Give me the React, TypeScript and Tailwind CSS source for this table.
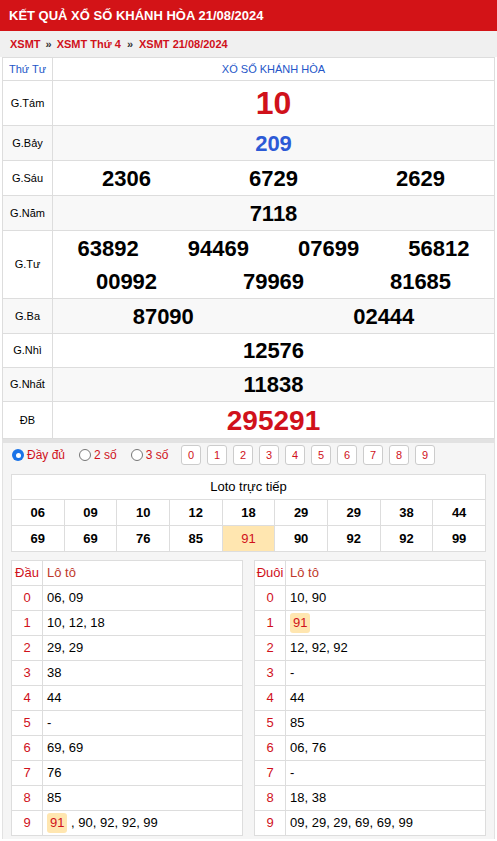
import type { ReactNode } from 'react';

const RED = 'text-[#d0111b]';

type PrizeRow = {
  label: string;
  lines: string[][];
  size: string;
  color: string;
  h: string;
  gray?: boolean;
};

const prizes: PrizeRow[] = [
  { label: 'G.Tám', lines: [['10']], size: 'text-[32px]', color: 'text-[#d0111b]', h: 'h-[45px]' },
  { label: 'G.Bảy', lines: [['209']], size: 'text-[22px]', color: 'text-[#2c5ad6]', h: 'h-[35px]', gray: true },
  { label: 'G.Sáu', lines: [['2306', '6729', '2629']], size: 'text-[22px]', color: 'text-black', h: 'h-[35px]' },
  { label: 'G.Năm', lines: [['7118']], size: 'text-[22px]', color: 'text-black', h: 'h-[35px]', gray: true },
  {
    label: 'G.Tư',
    lines: [
      ['63892', '94469', '07699', '56812'],
      ['00992', '79969', '81685'],
    ],
    size: 'text-[22px]',
    color: 'text-black',
    h: 'h-[68px]',
  },
  { label: 'G.Ba', lines: [['87090', '02444']], size: 'text-[22px]', color: 'text-black', h: 'h-[35px]', gray: true },
  { label: 'G.Nhì', lines: [['12576']], size: 'text-[22px]', color: 'text-black', h: 'h-[34px]' },
  { label: 'G.Nhất', lines: [['11838']], size: 'text-[22px]', color: 'text-black', h: 'h-[34px]', gray: true },
  { label: 'ĐB', lines: [['295291']], size: 'text-[28px]', color: 'text-[#d0111b]', h: 'h-[37px]' },
];

const loto = [
  ['06', '09', '10', '12', '18', '29', '29', '38', '44'],
  ['69', '69', '76', '85', '91', '90', '92', '92', '99'],
];

const dau: ReactNode[] = [
  '06, 09',
  '10, 12, 18',
  '29, 29',
  '38',
  '44',
  '-',
  '69, 69',
  '76',
  '85',
  <>
    <Hot>91</Hot> , 90, 92, 92, 99
  </>,
];

const duoi: ReactNode[] = [
  '10, 90',
  <Hot>91</Hot>,
  '12, 92, 92',
  '-',
  '44',
  '85',
  '06, 76',
  '-',
  '18, 38',
  '09, 29, 29, 69, 69, 99',
];

function Hot({ children }: { children: ReactNode }) {
  return <span className={`inline-block rounded-[3px] bg-[#ffe6b0] px-[3px] leading-[20px] ${RED}`}>{children}</span>;
}

function Radio({ label, checked }: { label: string; checked?: boolean }) {
  return (
    <label className="flex items-center gap-[3px]">
      {checked ? (
        <span className="flex h-[12px] w-[12px] items-center justify-center rounded-full bg-[#1a73e8]">
          <span className="h-[5px] w-[5px] rounded-full bg-white" />
        </span>
      ) : (
        <span className="h-[12px] w-[12px] rounded-full border border-[#767676] bg-white" />
      )}
      <span className={`text-[12px] ${RED}`}>{label}</span>
    </label>
  );
}

function ListTable({ head, rows }: { head: string; rows: ReactNode[] }) {
  return (
    <table className="w-full border-collapse bg-white text-[13px]">
      <tbody>
        <tr className="h-[25px]">
          <td className={`w-[31px] border border-[#ddd] text-center ${RED}`}>{head}</td>
          <td className="border border-[#ddd] pl-[4px] text-[#c0392b]">Lô tô</td>
        </tr>
        {rows.map((r, i) => (
          <tr key={i} className="h-[25px]">
            <td className={`border border-[#ddd] text-center ${RED}`}>{i}</td>
            <td className="border border-[#ddd] pl-[4px] text-black">{r}</td>
          </tr>
        ))}
      </tbody>
    </table>
  );
}

export default function App() {
  return (
    <div className="w-[497px] bg-white font-['Liberation_Sans',Arial,sans-serif]">
      <div className="flex h-[31px] items-center bg-[#d31317] px-[9px]">
        <h1 className="text-[13px] font-bold text-white">KẾT QUẢ XỔ SỐ KHÁNH HÒA 21/08/2024</h1>
      </div>
      <div className={`flex h-[26px] items-center bg-[#f0f0f0] px-[10px] text-[11px] font-bold ${RED}`}>
        XSMT <span className="mx-[5px] text-[#333]">»</span> XSMT Thứ 4 <span className="mx-[6px] text-[#333]">»</span> XSMT
        21/08/2024
      </div>

      <div className="px-[2px]">
        <table className="w-full border-collapse">
          <tbody>
            <tr className="h-[23px] text-[11px] text-[#2456c8]">
              <td className="w-[50px] border border-[#ddd] text-center">Thứ Tư</td>
              <td className="border border-[#ddd] text-center">XỔ SỐ KHÁNH HÒA</td>
            </tr>
            {prizes.map((p) => (
              <tr key={p.label} className={`${p.h} ${p.gray ? 'bg-[#f8f8f8]' : 'bg-white'}`}>
                <td className="border border-[#ddd] text-center text-[11px] text-black">{p.label}</td>
                <td className="border border-[#ddd]">
                  <div className="flex flex-col">
                    {p.lines.map((line, i) => (
                      <div key={i} className="flex">
                        {line.map((n, j) => (
                          <span
                            key={j}
                            className={`flex-1 text-center font-bold leading-[33px] ${p.size} ${p.color}`}
                          >
                            {n}
                          </span>
                        ))}
                      </div>
                    ))}
                  </div>
                </td>
              </tr>
            ))}
          </tbody>
        </table>
      </div>

      <div className="mx-[2px] border-x border-t-[4px] border-[#e2e2e2] bg-[#f5f5f5] px-[8px] pb-[3px] pt-[2px]">
        <div className="flex h-[20px] items-center">
          <div className="flex w-[170px] items-center gap-[14px] pl-[1px]">
            <Radio label="Đầy đủ" checked />
            <Radio label="2 số" />
            <Radio label="3 số" />
          </div>
          <div className="flex gap-[6px]">
            {['0', '1', '2', '3', '4', '5', '6', '7', '8', '9'].map((d) => (
              <button
                key={d}
                className={`flex h-[20px] w-[20px] items-center justify-center rounded-[3px] border border-[#ccc] bg-white text-[11px] ${RED}`}
              >
                {d}
              </button>
            ))}
          </div>
        </div>

        <table className="mt-[9px] w-full border-collapse bg-white text-[13px]">
          <tbody>
            <tr className="h-[25px]">
              <td colSpan={9} className="border border-[#ddd] text-center text-black">
                Loto trực tiếp
              </td>
            </tr>
            {loto.map((row, i) => (
              <tr key={i} className="h-[26px]">
                {row.map((n, j) => (
                  <td
                    key={j}
                    className={`w-[53px] border border-[#ddd] text-center font-bold ${
                      i === 1 && j === 4 ? `bg-[#ffe6b0] font-normal ${RED}` : 'text-black'
                    }`}
                  >
                    {n}
                  </td>
                ))}
              </tr>
            ))}
          </tbody>
        </table>

        <div className="mt-[8px] grid grid-cols-2 gap-[11px]">
          <ListTable head="Đầu" rows={dau} />
          <ListTable head="Đuôi" rows={duoi} />
        </div>
      </div>
    </div>
  );
}
